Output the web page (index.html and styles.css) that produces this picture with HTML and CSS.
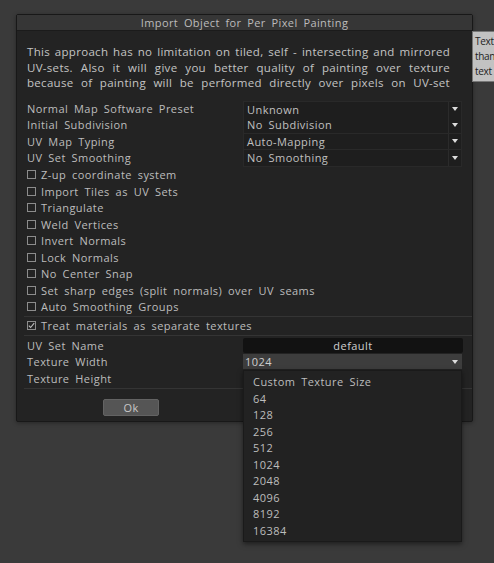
FILE: index.html
```html
<!DOCTYPE html>
<html>
<head>
<meta charset="utf-8">
<link rel="stylesheet" href="styles.css">
</head>
<body>
<div class="dialog">
  <div class="titlebar">Import Object for Per Pixel Painting</div>
  <div class="content">
    <p class="desc">This approach has no limitation on tiled, self - intersecting and mirrored<br>UV-sets. Also it will give you better quality of painting over texture<br>because of painting will be performed directly over pixels on UV-set</p>
    <div class="form">
      <div class="row"><span class="label">Normal Map Software Preset</span><div class="select"><span class="value">Unknown</span><span class="arrow-box"><span class="arrow"></span></span></div></div>
      <div class="row"><span class="label">Initial Subdivision</span><div class="select"><span class="value">No Subdivision</span><span class="arrow-box"><span class="arrow"></span></span></div></div>
      <div class="row"><span class="label">UV Map Typing</span><div class="select"><span class="value">Auto-Mapping</span><span class="arrow-box"><span class="arrow"></span></span></div></div>
      <div class="row"><span class="label">UV Set Smoothing</span><div class="select"><span class="value">No Smoothing</span><span class="arrow-box"><span class="arrow"></span></span></div></div>
      <div class="check-row"><span class="box"></span><span>Z-up coordinate system</span></div>
      <div class="check-row"><span class="box"></span><span>Import Tiles as UV Sets</span></div>
      <div class="check-row"><span class="box"></span><span>Triangulate</span></div>
      <div class="check-row"><span class="box"></span><span>Weld Vertices</span></div>
      <div class="check-row"><span class="box"></span><span>Invert Normals</span></div>
      <div class="check-row"><span class="box"></span><span>Lock Normals</span></div>
      <div class="check-row"><span class="box"></span><span>No Center Snap</span></div>
      <div class="check-row"><span class="box"></span><span>Set sharp edges (split normals) over UV seams</span></div>
      <div class="check-row"><span class="box"></span><span>Auto Smoothing Groups</span></div>
      <div class="sep sep1"></div>
      <div class="check-row treat"><span class="box"><svg width="9" height="9" viewBox="0 0 9 9"><polyline points="1.8,4.6 3.6,6.5 7.2,2.2" fill="none" stroke="#bdbdbd" stroke-width="1.1"/></svg></span><span>Treat materials as separate textures</span></div>
      <div class="sep sep2"></div>
      <div class="row"><span class="label">UV Set Name</span><div class="input">default</div></div>
      <div class="row"><span class="label">Texture Width</span>
        <div class="combo-wrap">
          <div class="combo"><span class="value">1024</span><span class="arrow-box plain"><span class="arrow"></span></span></div>
          <div class="menu">
            <div class="item">Custom Texture Size</div>
            <div class="item">64</div>
            <div class="item">128</div>
            <div class="item">256</div>
            <div class="item">512</div>
            <div class="item">1024</div>
            <div class="item">2048</div>
            <div class="item">4096</div>
            <div class="item">8192</div>
            <div class="item">16384</div>
          </div>
        </div>
      </div>
      <div class="row"><span class="label">Texture Height</span><span></span></div>
      <div class="sep sep3"></div>
    </div>
    <div class="buttons"><button class="btn">Ok</button></div>
  </div>
</div>
<div class="tooltip">Text<br>than<br>text</div>
</body>
</html>
```

FILE: styles.css
```css
html, body {
  margin: 0;
  padding: 0;
  height: 100%;
  overflow: hidden;
}
body {
  background: #3a3a3a;
  font-family: "Open Sans", "Liberation Sans", sans-serif;
  font-size: 11px;
  color: #bdbdbd;
  letter-spacing: 0.45px;
  word-spacing: 2.5px;
  position: relative;
}
.dialog {
  position: absolute;
  left: 16px;
  top: 14px;
  width: 457px;
  height: 408px;
  box-sizing: border-box;
  background: #232323;
  border: 1px solid #181818;
  border-radius: 2px;
  box-shadow: 0 1px 4px rgba(0,0,0,0.35);
}
.titlebar {
  height: 15px;
  line-height: 15px;
  background: #363636;
  border-bottom: 1px solid #1b1b1b;
  text-align: center;
  color: #bcbcbc;
  font-size: 11px;
  letter-spacing: 0.4px;
}
.content {
  padding: 13px 10px 0 10px;
}
.desc {
  margin: 0 0 10px 0;
  width: 423px;
  font-size: 11.5px;
  line-height: 15.5px;
  letter-spacing: 0.3px;
  word-spacing: 0;
  text-align: justify;
  text-align-last: justify;
  color: #c4c4c4;
  white-space: nowrap;
}
.form {
  display: flex;
  flex-direction: column;
}
.row {
  display: grid;
  grid-template-columns: 216px 219px;
  height: 16.5px;
  align-items: stretch;
}
.label {
  line-height: 16.5px;
}
.select {
  display: flex;
  box-sizing: border-box;
  background: #1e1e1e;
  border: 1px solid #292929;
  border-top-width: 0;
}
.row:first-child .select {
  border-top-width: 1px;
}
.select .value, .combo .value {
  flex: 1;
  padding-left: 3px;
  line-height: 15px;
  color: #c0c0c0;
}
.arrow-box {
  width: 12px;
  border-left: 1px solid #2b2b2b;
  display: flex;
  align-items: center;
  justify-content: center;
}
.arrow-box.plain {
  border-left: none;
  width: 15px;
}
.arrow {
  width: 0;
  height: 0;
  border-left: 3.5px solid transparent;
  border-right: 3.5px solid transparent;
  border-top: 4px solid #dcdcdc;
}
.check-row {
  display: flex;
  align-items: center;
  height: 16.5px;
}
.box {
  width: 9px;
  height: 9px;
  box-sizing: border-box;
  border: 1px solid #8c8c8c;
  margin-right: 5px;
  display: flex;
  align-items: center;
  justify-content: center;
  position: relative;
}
.box svg {
  position: absolute;
  left: -1px;
  top: -1px;
}
.sep {
  height: 1px;
  background: #343434;
  margin-left: -3px;
  margin-right: -10px;
}
.sep1 { margin-top: 0.5px; }
.treat { height: 18px; }
.sep2 { margin-bottom: 2px; }
.sep3 { margin-top: 1px; }
.input {
  height: 15px;
  line-height: 15px;
  background: #121212;
  border-radius: 2px;
  text-align: center;
  color: #cfcfcf;
  width: 220px;
}
.combo-wrap {
  position: relative;
}
.combo {
  display: flex;
  height: 15px;
  background: #3d3d3d;
}
.combo .value {
  padding-left: 2px;
  color: #cfcfcf;
}
.menu {
  position: absolute;
  left: 0;
  top: 16px;
  width: 219px;
  box-sizing: border-box;
  background: #222222;
  border: 1px solid #1a1a1a;
  box-shadow: 0 2px 5px rgba(0,0,0,0.5);
  padding: 3px 0 2px 0;
  z-index: 5;
}
.item {
  height: 16.5px;
  line-height: 16.5px;
  padding-left: 9px;
  color: #bdbdbd;
}
.buttons {
  padding-left: 76px;
  margin-top: 10px;
}
.btn {
  width: 56px;
  height: 17px;
  padding: 0;
  background: #555555;
  border: 1px solid #636363;
  border-radius: 2px;
  color: #c8c8c8;
  font-family: inherit;
  font-size: 11px;
  letter-spacing: inherit;
  line-height: 15px;
}
.tooltip {
  position: absolute;
  left: 472px;
  top: 31px;
  width: 22px;
  box-sizing: border-box;
  padding: 2px 0 2px 2px;
  background: #c2c2c2;
  border: 1px solid #777;
  border-right: none;
  color: #1e1e1e;
  font-size: 10px;
  line-height: 15px;
  white-space: nowrap;
  letter-spacing: -0.3px;
  word-spacing: 0;
  overflow: hidden;
}
```
